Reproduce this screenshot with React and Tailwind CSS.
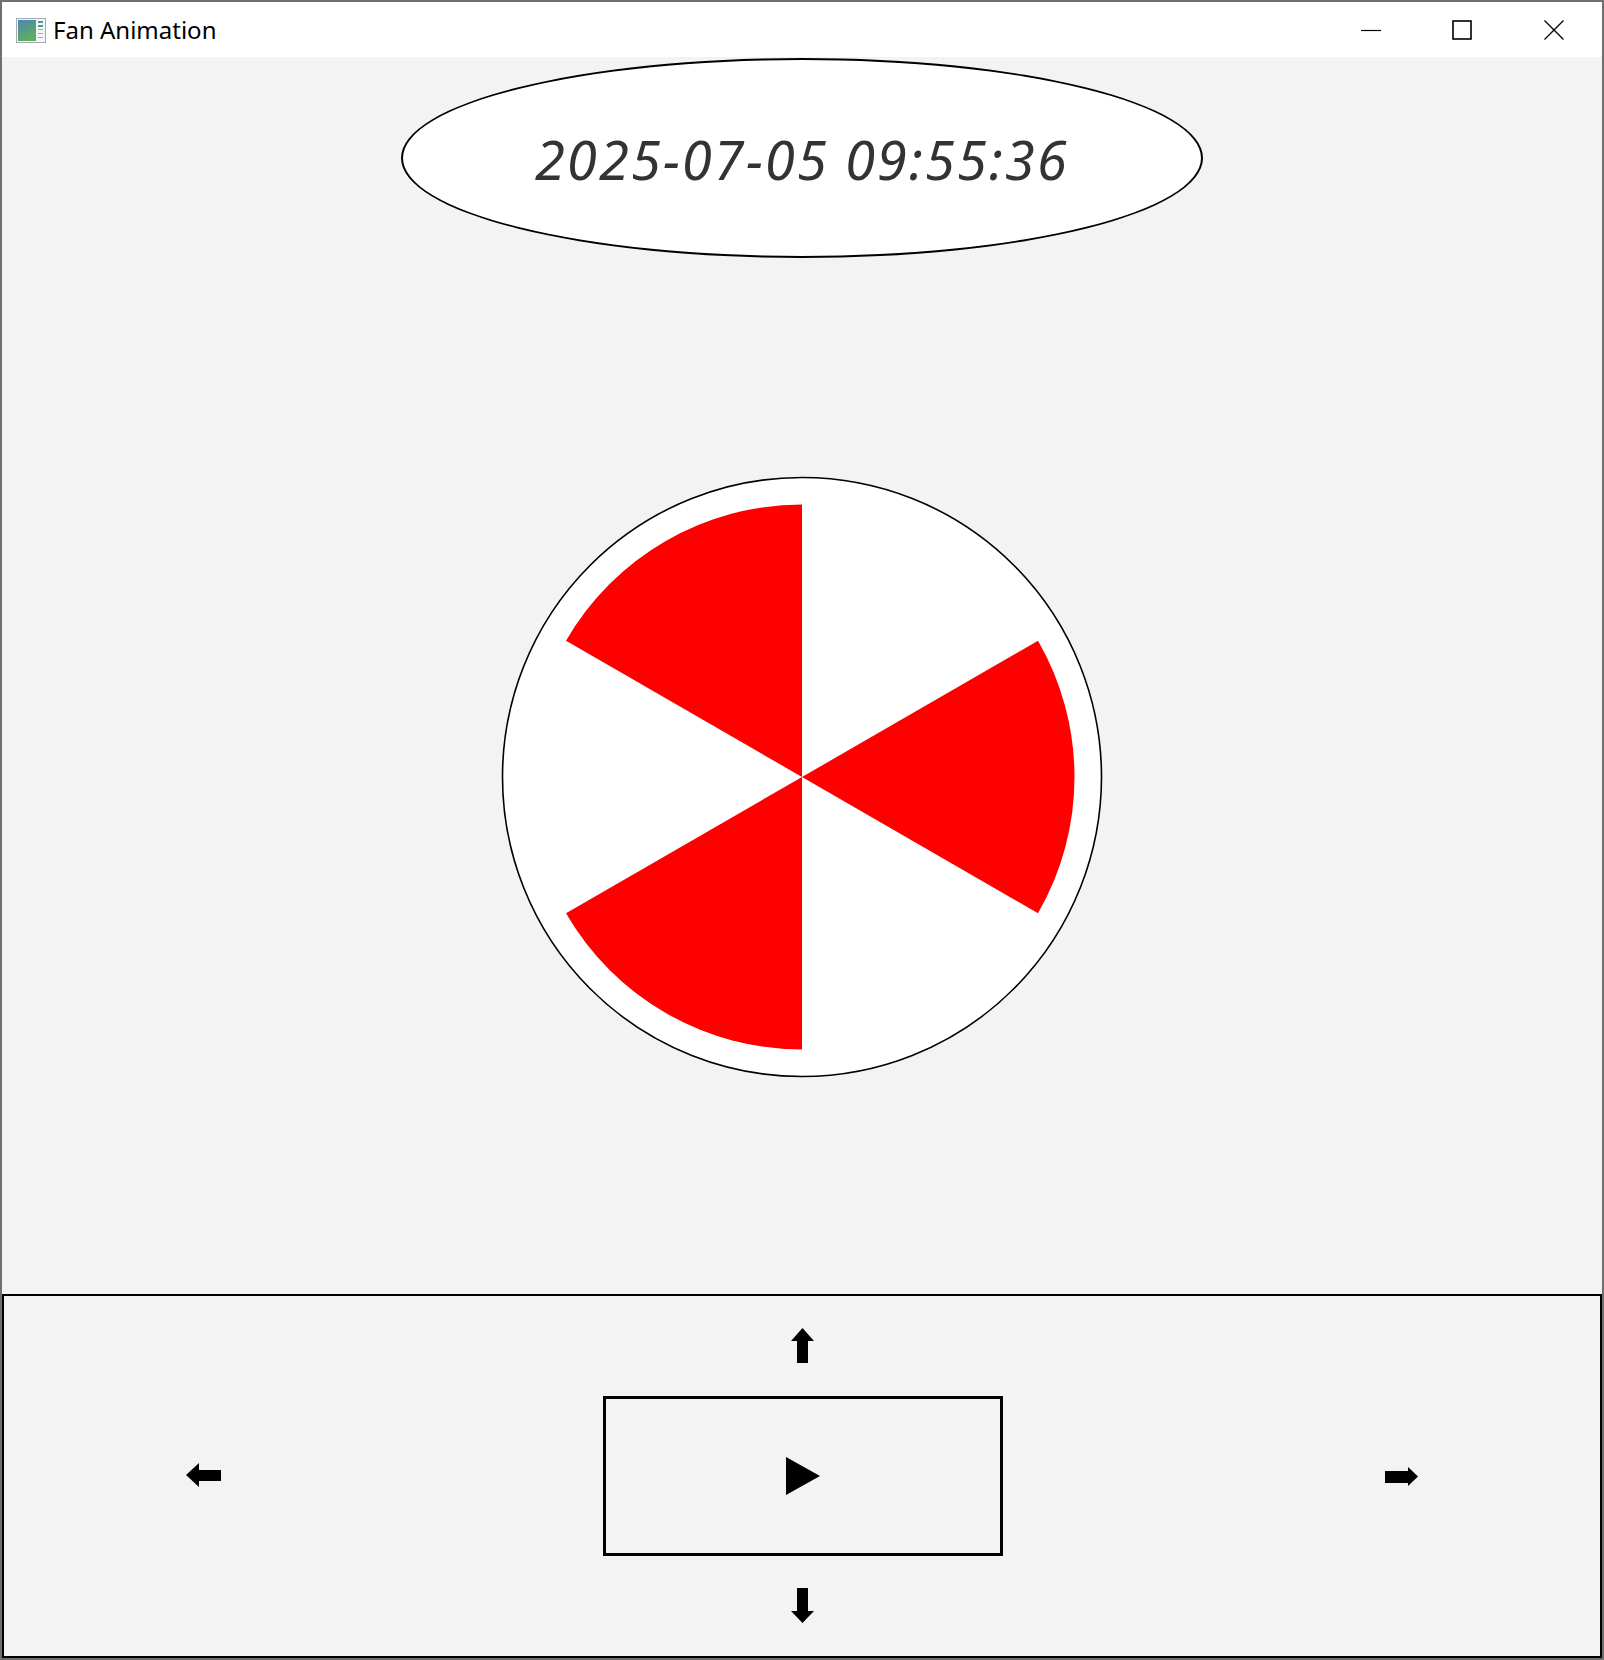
import React from "react";

const blades = [
  [90, 150],
  [-30, 30],
  [210, 270],
];

function sector(cx, cy, r, a0, a1) {
  const rad = (a) => (a * Math.PI) / 180;
  const x0 = cx + r * Math.cos(rad(a0));
  const y0 = cy - r * Math.sin(rad(a0));
  const x1 = cx + r * Math.cos(rad(a1));
  const y1 = cy - r * Math.sin(rad(a1));
  return `M${cx},${cy} L${x0},${y0} A${r},${r} 0 0 0 ${x1},${y1} Z`;
}

function AppIcon() {
  return (
    <svg width="30" height="25" viewBox="0 0 30 25">
      <defs>
        <linearGradient id="ig" x1="0" y1="0" x2="0.4" y2="1">
          <stop offset="0" stopColor="#4b86b4" />
          <stop offset="1" stopColor="#5fae5f" />
        </linearGradient>
      </defs>
      <rect x="0.5" y="0.5" width="29" height="24" fill="#f4f6f8" stroke="#a5aab0" />
      <rect x="2" y="2" width="18" height="21" fill="url(#ig)" />
      <rect x="22" y="3" width="5" height="2" fill="#4a9a9a" />
      <rect x="22" y="7" width="5" height="2" fill="#4a9a9a" />
      <rect x="22" y="11" width="5" height="1" fill="#9ab" />
      <rect x="22" y="15" width="5" height="1" fill="#9ab" />
      <rect x="22" y="19" width="5" height="1" fill="#9ab" />
    </svg>
  );
}

function TitleBar() {
  return (
    <div className="h-[55px] bg-white flex items-center relative">
      <div className="ml-[14px] mt-[2px]">
        <AppIcon />
      </div>
      <span
        className="ml-[7px] text-[24px] text-black leading-none"
        style={{ fontFamily: '"Noto Sans", sans-serif' }}
      >
        Fan Animation
      </span>
      <div className="ml-auto flex items-center h-full">
        <svg width="20" height="20" viewBox="0 0 20 20" className="mr-[71px]">
          <line x1="0" y1="10.5" x2="20" y2="10.5" stroke="#000" strokeWidth="1.2" />
        </svg>
        <svg width="20" height="20" viewBox="0 0 20 20" className="mr-[72px]">
          <rect x="1" y="1" width="18" height="18" fill="none" stroke="#000" strokeWidth="1.6" />
        </svg>
        <svg width="20" height="20" viewBox="0 0 20 20" className="mr-[38px]">
          <path d="M0.5 0.5 L19.5 19.5 M19.5 0.5 L0.5 19.5" stroke="#000" strokeWidth="1.3" />
        </svg>
      </div>
    </div>
  );
}

function FanArea() {
  return (
    <div className="h-[1237px] bg-[#f3f3f3] flex flex-col items-center">
      <div className="mt-[1px] w-[802px] h-[200px] rounded-[50%] border-2 border-black bg-white flex items-center justify-center">
        <span
          className="italic text-[54px] text-[#333] tracking-[2.2px] leading-none mt-[1px]"
          style={{ fontFamily: '"Noto Sans", sans-serif' }}
        >
          2025-07-05 09:55:36
        </span>
      </div>
      <svg width="604" height="604" viewBox="0 0 604 604" className="mt-[217px]">
        <circle cx="302" cy="302" r="299.5" fill="#fff" stroke="#000" strokeWidth="1.6" />
        {blades.map(([a0, a1], i) => (
          <path key={i} d={sector(302, 302, 272.5, a0, a1)} fill="#ff0000" />
        ))}
      </svg>
    </div>
  );
}

function Controls() {
  return (
    <div className="h-[364px] border-2 border-black bg-[#f3f3f3] flex flex-col items-center pt-[32px]">
      <svg width="23" height="35" viewBox="0 0 23 35">
        <polygon points="11.5,0 23,13 17,13 17,35 6,35 6,13 0,13" fill="#000" />
      </svg>
      <div className="mt-[33px] w-full px-[182px] flex items-center justify-between">
        <svg width="35" height="24" viewBox="0 0 35 24" className="mt-[-2px]">
          <polygon points="0,12 13,0 13,7 35,7 35,18 13,18 13,24" fill="#000" />
        </svg>
        <div className="w-[400px] h-[160px] border-[3.5px] border-black flex items-center justify-center">
          <svg width="34" height="38" viewBox="0 0 34 38">
            <polygon points="0,0 34,19 0,38" fill="#000" />
          </svg>
        </div>
        <svg width="33" height="19" viewBox="0 0 33 19" className="mt-[1px]">
          <polygon points="0,4 23,4 23,0 33,9.5 23,19 23,16 0,16" fill="#000" />
        </svg>
      </div>
      <svg width="23" height="35" viewBox="0 0 23 35" className="mt-[32px]">
        <polygon points="6,0 17,0 17,23 23,23 11.5,35 0,23 6,23" fill="#000" />
      </svg>
    </div>
  );
}

export default function App() {
  return (
    <div className="w-[1604px] h-[1660px] border-2 border-[#6f6f6f] flex flex-col bg-[#f3f3f3]">
      <TitleBar />
      <FanArea />
      <Controls />
    </div>
  );
}
